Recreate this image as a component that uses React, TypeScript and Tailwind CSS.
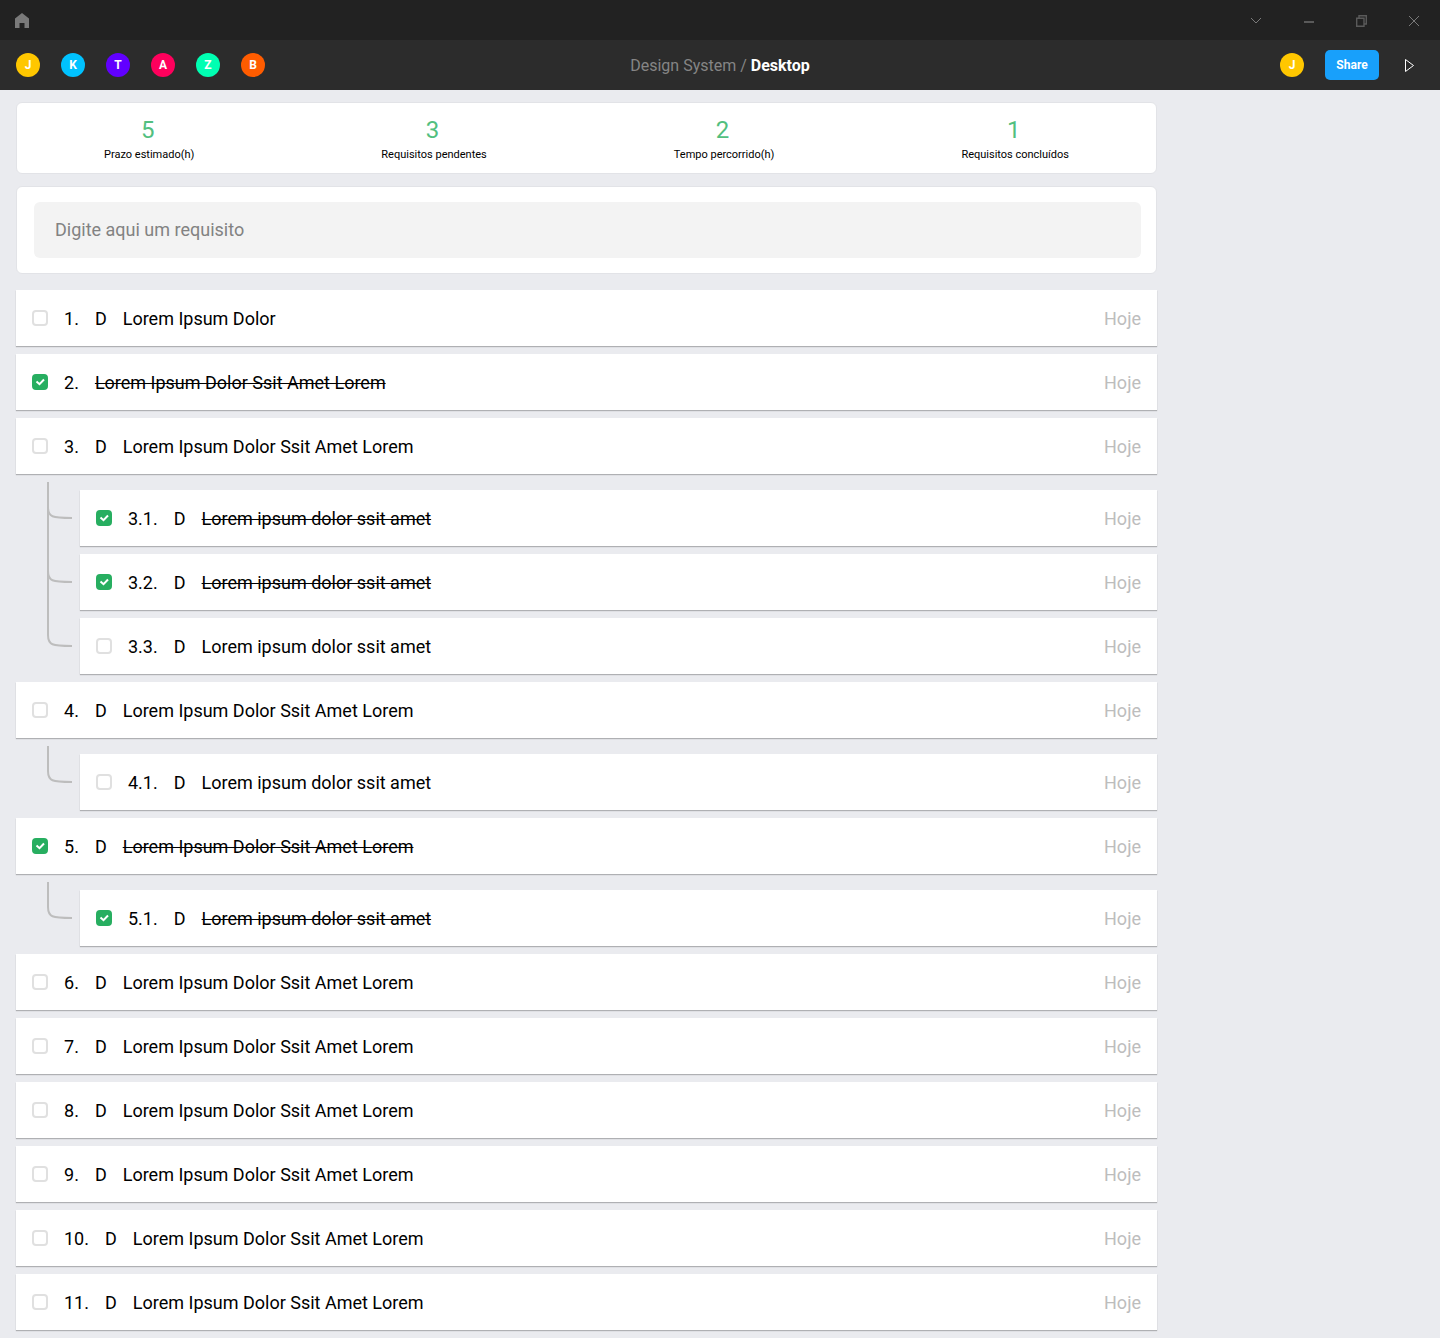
import React from "react";

type Person = { name: string; color: string };
type Item = {
  id: string;
  text: string;
  done?: boolean;
  handle?: boolean;
  children?: Item[];
};

const people: Person[] = [
  { name: "J", color: "bg-[#ffc700]" },
  { name: "K", color: "bg-[#00c2ff]" },
  { name: "T", color: "bg-[#6100ff]" },
  { name: "A", color: "bg-[#ff005c]" },
  { name: "Z", color: "bg-[#00ffb2]" },
  { name: "B", color: "bg-[#ff5c00]" },
];

const stats = [
  { value: "5", label: "Prazo estimado(h)" },
  { value: "3", label: "Requisitos pendentes" },
  { value: "2", label: "Tempo percorrido(h)" },
  { value: "1", label: "Requisitos concluídos" },
];

const long = "Lorem Ipsum Dolor Ssit Amet Lorem";
const short = "Lorem ipsum dolor ssit amet";

const items: Item[] = [
  { id: "1", text: "Lorem Ipsum Dolor" },
  { id: "2", text: long, done: true, handle: false },
  {
    id: "3",
    text: long,
    children: [
      { id: "3.1", text: short, done: true },
      { id: "3.2", text: short, done: true },
      { id: "3.3", text: short },
    ],
  },
  { id: "4", text: long, children: [{ id: "4.1", text: short }] },
  {
    id: "5",
    text: long,
    done: true,
    children: [{ id: "5.1", text: short, done: true }],
  },
  { id: "6", text: long },
  { id: "7", text: long },
  { id: "8", text: long },
  { id: "9", text: long },
  { id: "10", text: long },
  { id: "11", text: long },
];

function Avatar({ name, color }: Person) {
  return (
    <span
      className={`flex size-6 items-center justify-center rounded-full text-xs font-bold text-white ${color}`}
    >
      {name}
    </span>
  );
}

function TitleBar() {
  return (
    <div className="flex h-10 items-center justify-between bg-[#222222] pr-[18px] pl-[14px] text-[#7a7a7a]">
      <button type="button" aria-label="Home">
        <svg width="16" height="16" viewBox="0 0 16 16" fill="currentColor">
          <path d="M8 1 15 6.5V16H10.5V11H5.5V16H1V6.5Z" />
        </svg>
      </button>
      <div className="flex items-center gap-[37px]">
        <button type="button" aria-label="Menu">
          <svg width="16" height="16" viewBox="0 0 16 16" fill="none" stroke="currentColor">
            <path d="M4 6 9 11 14 6" />
          </svg>
        </button>
        <button type="button" aria-label="Minimize">
          <svg width="16" height="16" viewBox="0 0 16 16" fill="#5a5a5a">
            <path d="M4 9H14V11H4Z" />
          </svg>
        </button>
        <button type="button" aria-label="Restore">
          <svg
            width="16"
            height="16"
            viewBox="0 0 16 16"
            fill="none"
            stroke="#5a5a5a"
            strokeWidth="1.4"
          >
            <path d="M3.7 6.2H11V14.2H3.7ZM6 6V3.7H13.3V12H11" />
          </svg>
        </button>
        <button type="button" aria-label="Close">
          <svg width="16" height="16" viewBox="0 0 16 16" fill="none" stroke="currentColor">
            <path d="M3 4 13 14M13 4 3 14" />
          </svg>
        </button>
      </div>
    </div>
  );
}

function Toolbar() {
  return (
    <header className="grid h-[50px] grid-cols-[1fr_auto_1fr] items-center bg-[#2c2c2c] px-4">
      <div className="flex items-center gap-[21px]">
        {people.map((p) => (
          <Avatar key={p.name} {...p} />
        ))}
      </div>
      <h1 className="pt-0.5 text-base text-[#858585]">
        Design System / <span className="font-bold text-white">Desktop</span>
      </h1>
      <div className="flex items-center justify-end gap-[21px]">
        <Avatar name="J" color="bg-[#ffc700]" />
        <button
          type="button"
          className="h-[30px] w-[54px] rounded-[5px] bg-[#18a0fb] text-xs font-bold text-white"
        >
          Share
        </button>
        <button type="button" aria-label="Play" className="w-6">
          <svg width="16" height="16" viewBox="0 0 16 16" fill="none" stroke="#ffffff">
            <path d="M5.5 2.5 13.5 8.5 5.5 14.5Z" />
          </svg>
        </button>
      </div>
    </header>
  );
}

function Row({ item }: { item: Item }) {
  const [done, setDone] = React.useState(!!item.done);
  const inputId = `item-${item.id}`;
  return (
    <div className="flex h-14 flex-1 items-center gap-4 bg-white px-4 text-lg leading-[21px] text-black shadow-[0_1px_1px_rgba(0,0,0,0.25)]">
      <span className="relative size-4">
        <input
          id={inputId}
          type="checkbox"
          checked={done}
          onChange={() => setDone(!done)}
          className="block size-4 appearance-none rounded-sm border-2 border-[#e0e0e0] bg-white checked:border-[#27ae60] checked:bg-[#27ae60]"
        />
        {done && (
          <svg
            className="pointer-events-none absolute inset-0"
            width="16"
            height="16"
            viewBox="0 0 16 16"
            fill="none"
            stroke="#ffffff"
            strokeWidth="2"
          >
            <path d="M4.5 7.5 7.5 10.2 12 5.5" />
          </svg>
        )}
      </span>
      <span>{item.id}.</span>
      {item.handle !== false && <span>D</span>}
      <label htmlFor={inputId} className={done ? "line-through decoration-1" : ""}>
        {item.text}
      </label>
      <span className="ml-auto text-[#bdbdbd]">Hoje</span>
    </div>
  );
}

function Connector({ last }: { last: boolean }) {
  return (
    <svg
      className="mr-2 ml-[31px] shrink-0"
      width="25"
      height="64"
      viewBox="0 0 25 64"
      fill="none"
      stroke="#bdbdbd"
      strokeWidth="2"
    >
      {!last && <path d="M1 0V64" />}
      <path d="M1 0V25C1 35 5 36 25 36" />
    </svg>
  );
}

export default function App() {
  return (
    <div className="min-h-screen bg-[#eaebef] font-['Roboto',sans-serif]">
      <TitleBar />
      <Toolbar />
      <main className="px-4 pt-3 pb-2 lg:pr-[283px]">
        <dl className="flex justify-between rounded-md border border-[#e2e3e7] bg-white px-[87px] pt-[11px] pb-[10px]">
          {stats.map((s) => (
            <div key={s.label} className="flex flex-col-reverse items-center">
              <dt className="mt-px text-[11px] leading-4 text-black">{s.label}</dt>
              <dd className="pr-[3px] text-2xl text-[#52bf80]">{s.value}</dd>
            </div>
          ))}
        </dl>
        <form
          className="mt-3 rounded-md border border-[#e2e3e7] bg-white py-[15px] pr-[15px] pl-[17px]"
          onSubmit={(e) => e.preventDefault()}
        >
          <input
            type="text"
            aria-label="Requisito"
            placeholder="Digite aqui um requisito"
            className="block h-14 w-full rounded-md bg-[#f3f3f3] px-[21px] pb-0.5 text-lg text-black outline-none placeholder:text-[#828282]"
          />
        </form>
        <ul className="mt-4 flex flex-col gap-2">
          {items.map((item) => (
            <li key={item.id}>
              <div className="flex">
                <Row item={item} />
              </div>
              {item.children && (
                <ul className="mt-2">
                  {item.children.map((child, i) => (
                    <li key={child.id} className="flex items-end">
                      <Connector last={i === item.children!.length - 1} />
                      <Row item={child} />
                    </li>
                  ))}
                </ul>
              )}
            </li>
          ))}
        </ul>
      </main>
    </div>
  );
}
